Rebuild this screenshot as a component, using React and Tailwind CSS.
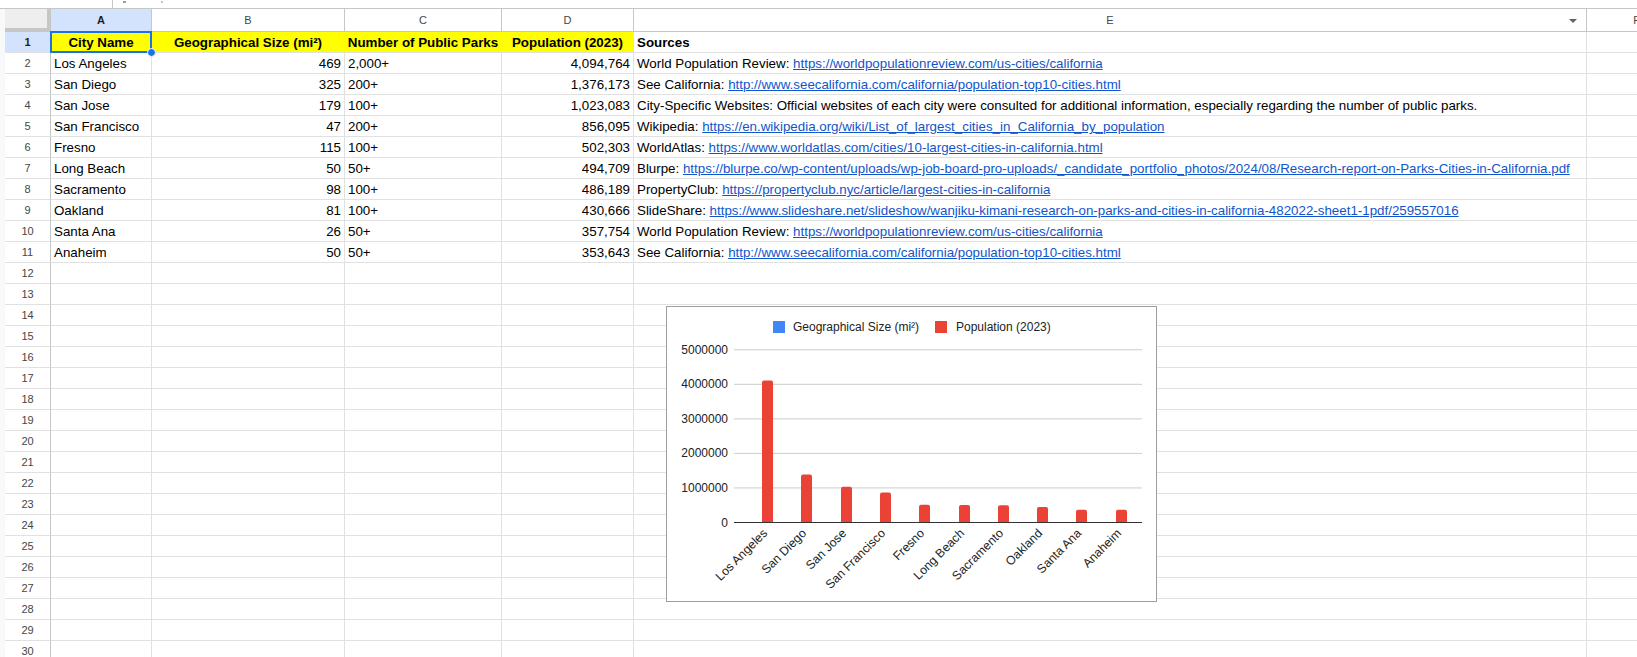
import React from 'react';

// column widths (box incl. right gridline)
const colW = ['w-[101px]', 'w-[193px]', 'w-[157px]', 'w-[132px]', 'w-[953px]', 'w-[100px]'];
const letters = ['A', 'B', 'C', 'D', 'E', 'F'];

const data = [
  ['Los Angeles', '469', '2,000+', '4,094,764', 'World Population Review: ', 'https://worldpopulationreview.com/us-cities/california'],
  ['San Diego', '325', '200+', '1,376,173', 'See California: ', 'http://www.seecalifornia.com/california/population-top10-cities.html'],
  ['San Jose', '179', '100+', '1,023,083', 'City-Specific Websites: Official websites of each city were consulted for additional information, especially regarding the number of public parks.', ''],
  ['San Francisco', '47', '200+', '856,095', 'Wikipedia: ', 'https://en.wikipedia.org/wiki/List_of_largest_cities_in_California_by_population'],
  ['Fresno', '115', '100+', '502,303', 'WorldAtlas: ', 'https://www.worldatlas.com/cities/10-largest-cities-in-california.html'],
  ['Long Beach', '50', '50+', '494,709', 'Blurpe: ', 'https://blurpe.co/wp-content/uploads/wp-job-board-pro-uploads/_candidate_portfolio_photos/2024/08/Research-report-on-Parks-Cities-in-California.pdf'],
  ['Sacramento', '98', '100+', '486,189', 'PropertyClub: ', 'https://propertyclub.nyc/article/largest-cities-in-california'],
  ['Oakland', '81', '100+', '430,666', 'SlideShare: ', 'https://www.slideshare.net/slideshow/wanjiku-kimani-research-on-parks-and-cities-in-california-482022-sheet1-1pdf/259557016'],
  ['Santa Ana', '26', '50+', '357,754', 'World Population Review: ', 'https://worldpopulationreview.com/us-cities/california'],
  ['Anaheim', '50', '50+', '353,643', 'See California: ', 'http://www.seecalifornia.com/california/population-top10-cities.html'],
];

const populations = [4094764, 1376173, 1023083, 856095, 502303, 494709, 486189, 430666, 357754, 353643];

const cellBase = 'h-full shrink-0 border-r border-b border-[#e1e1e1] px-[3px] pt-[2px] flex items-center overflow-hidden whitespace-nowrap';

function RowHeader({ n, active }) {
  return (
    <>
      <div className="w-[5px] shrink-0 h-full bg-[#f8f9fa]" />
      <div
        className={`w-[46px] shrink-0 h-full flex items-center justify-center border-r border-b border-r-[#c4c7c5] border-b-[#e1e1e1] text-[11px] ${
          active ? 'bg-[#d3e3fd] font-bold text-[#1f1f1f]' : 'text-[#444746]'
        }`}
      >
        {n}
      </div>
    </>
  );
}

function Chart() {
  const zeroY = 215;
  const perM = 34.55;
  const barX = [95, 134, 174, 213, 252, 292, 331, 370, 409, 449];
  const ticks = [0, 1, 2, 3, 4, 5];
  return (
    <div className="absolute left-[666px] top-[306px] w-[491px] h-[296px] border border-[#9e9e9e] bg-white">
      <svg width="489" height="294" className="block">
        {/* legend */}
        <rect x="106" y="14" width="12" height="12" fill="#4285f4" />
        <text x="126" y="24" fontSize="12" fill="#222">Geographical Size (mi²)</text>
        <rect x="268" y="14" width="12" height="12" fill="#ea4335" />
        <text x="289" y="24" fontSize="12" fill="#222">Population (2023)</text>

        {/* gridlines + y labels */}
        {ticks.map((t) => {
          const y = zeroY - t * perM;
          return (
            <g key={t}>
              {t > 0 && <line x1="67" x2="475" y1={y + 0.5} y2={y + 0.5} stroke="#cccccc" />}
              <text x="61" y={y + 4.5} fontSize="12" fill="#222" textAnchor="end">
                {t === 0 ? '0' : `${t}000000`}
              </text>
            </g>
          );
        })}

        {/* bars */}
        {populations.map((p, i) => {
          const h = (p / 1e6) * perM;
          const x = barX[i];
          const top = zeroY - h;
          return (
            <path
              key={i}
              d={`M${x} ${zeroY} V${top + 2} Q${x} ${top} ${x + 2} ${top} H${x + 9} Q${x + 11} ${top} ${x + 11} ${top + 2} V${zeroY} Z`}
              fill="#ea4335"
            />
          );
        })}
        <line x1="67" x2="475" y1={zeroY + 0.5} y2={zeroY + 0.5} stroke="#333" />

        {/* x labels */}
        {data.map((r, i) => (
          <text
            key={r[0]}
            transform={`translate(${barX[i] + 6} 227) rotate(-45)`}
            fontSize="12.3"
            fill="#222"
            textAnchor="end"
          >
            {r[0]}
          </text>
        ))}
      </svg>
    </div>
  );
}

export default function App() {
  const emptyRows = [];
  for (let n = 12; n <= 30; n++) emptyRows.push(n);

  return (
    <div className="relative w-[1637px] h-[657px] overflow-hidden bg-white font-['Liberation_Sans',Arial,sans-serif] text-[13.33px] text-black">
      {/* formula bar remnant */}
      <div className="h-[8px] flex">
        <div className="w-[112px]" />
        <div className="w-px h-full bg-[#c4c7c5]" />
        <div className="ml-[10px] w-[3px] h-[2px] mt-[1px] bg-[#9aa0a6]" />
        <div className="ml-[35px] w-[2px] h-[2px] mt-[1px] bg-[#c4c7c5]" />
      </div>

      {/* column headers */}
      <div className="flex h-[24px] border-t border-[#c4c7c5]">
        <div className="w-[5px] shrink-0 h-full bg-[#f8f9fa]" />
        <div className="w-[46px] shrink-0 h-full bg-[#eeeeee] border-r-[4px] border-b-[4px] border-[#c4c7c5]" />
        {letters.map((l, i) => (
          <div
            key={l}
            className={`${colW[i]} shrink-0 h-full relative flex items-center justify-center border-r border-b border-[#c4c7c5] text-[11px] ${
              i === 0 ? 'bg-[#d3e3fd] font-bold text-[#1f1f1f]' : 'text-[#444746]'
            }`}
          >
            {l}
            {l === 'E' && (
              <span className="absolute right-[9px] top-[10px] w-0 h-0 border-l-[4px] border-r-[4px] border-t-[4px] border-l-transparent border-r-transparent border-t-[#5f6368]" />
            )}
          </div>
        ))}
      </div>

      {/* row 1: headings */}
      <div className="flex h-[21px]">
        <RowHeader n={1} active />
        <div className={`${colW[0]} ${cellBase} relative justify-center bg-[#ffff00] font-bold overflow-visible`}>
          City Name
          <span className="absolute -left-px -top-px -right-px -bottom-px border-2 border-[#1a73e8]" />
          <span className="absolute -right-[5px] -bottom-[5px] w-[9px] h-[9px] rounded-full bg-[#1a73e8] border border-white z-10" />
        </div>
        <div className={`${colW[1]} ${cellBase} justify-center bg-[#ffff00] border-r-[#ffff00] font-bold`}>Geographical Size (mi²)</div>
        <div className={`${colW[2]} ${cellBase} justify-center bg-[#ffff00] border-r-[#ffff00] font-bold`}>Number of Public Parks</div>
        <div className={`${colW[3]} ${cellBase} justify-center bg-[#ffff00] font-bold`}>Population (2023)</div>
        <div className={`${colW[4]} ${cellBase} font-bold`}>Sources</div>
        <div className={`${colW[5]} ${cellBase}`} />
      </div>

      {/* data rows */}
      {data.map((r, i) => (
        <div key={r[0]} className="flex h-[21px]">
          <RowHeader n={i + 2} />
          <div className={`${colW[0]} ${cellBase}`}>{r[0]}</div>
          <div className={`${colW[1]} ${cellBase} justify-end`}>{r[1]}</div>
          <div className={`${colW[2]} ${cellBase}`}>{r[2]}</div>
          <div className={`${colW[3]} ${cellBase} justify-end`}>{r[3]}</div>
          <div className={`${colW[4]} ${cellBase}`}>
            <span className="whitespace-pre">{r[4]}</span>
            {r[5] && <span className="text-[#1155cc] underline">{r[5]}</span>}
          </div>
          <div className={`${colW[5]} ${cellBase}`} />
        </div>
      ))}

      {/* empty rows */}
      {emptyRows.map((n) => (
        <div key={n} className="flex h-[21px]">
          <RowHeader n={n} />
          {colW.map((w, i) => (
            <div key={i} className={`${w} ${cellBase}`} />
          ))}
        </div>
      ))}

      <Chart />
    </div>
  );
}
